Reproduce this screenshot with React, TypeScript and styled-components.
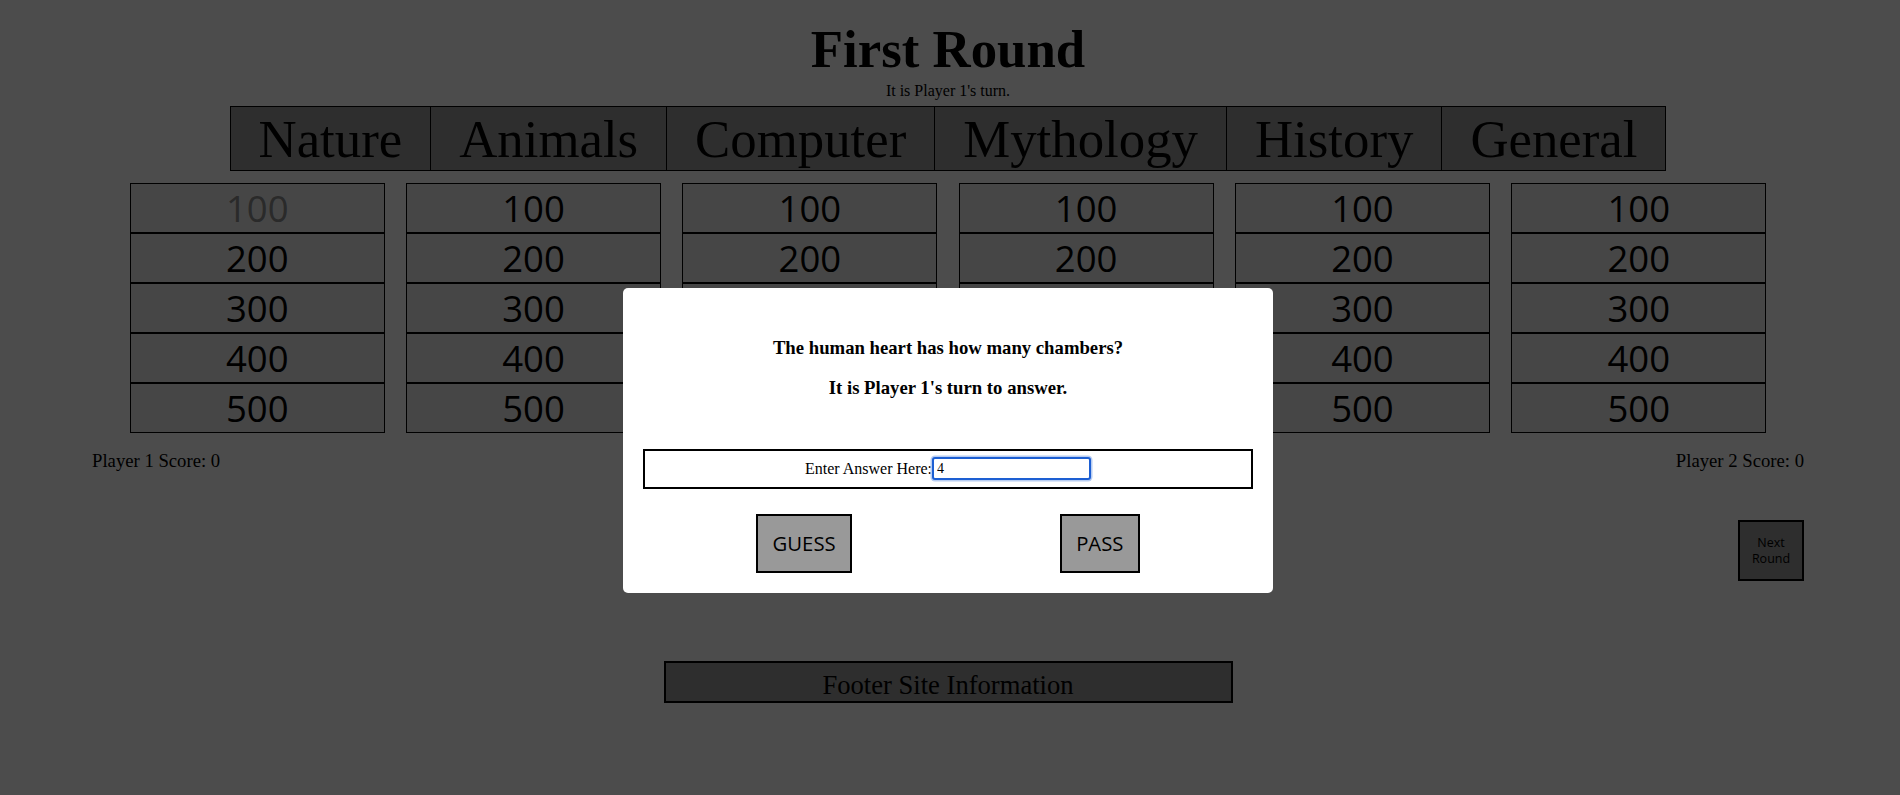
import React from "react";
import styled, { createGlobalStyle } from "styled-components";

const GlobalStyle = createGlobalStyle`
  html, body {
    margin: 0;
    padding: 0;
    background: #ffffff;
  }
  body {
    font-family: "Liberation Serif", "Times New Roman", serif;
    color: #000;
  }
`;

const Page = styled.div`
  width: 1896px;
  padding-top: 19px;
  display: flex;
  flex-direction: column;
  align-items: center;
`;

const Title = styled.h1`
  margin: 0;
  font-family: "Liberation Serif", serif;
  font-size: 52.8px;
  font-weight: bold;
  line-height: normal;
`;

const Turn = styled.div`
  margin-top: 2.5px;
  font-size: 16px;
  line-height: normal;
`;

const Categories = styled.div`
  display: flex;
  margin-top: 6px;
  border: 1px solid #000;
  background: #999999;
`;

const Category = styled.div`
  padding: 1px 28px 0;
  font-family: "Liberation Serif", serif;
  font-size: 52.8px;
  line-height: 62px;
  white-space: nowrap;
  & + & {
    border-left: 1px solid #000;
  }
`;

const Board = styled.div`
  display: grid;
  grid-template-columns: repeat(6, 255px);
  column-gap: 21.3px;
  margin-top: 12.5px;
`;

const Column = styled.div`
  display: flex;
  flex-direction: column;
`;

const Cell = styled.div<{ $used?: boolean }>`
  height: 48px;
  border: 1px solid #000;
  background: #ececec;
  display: flex;
  justify-content: center;
  font-family: "Open Sans", "Noto Sans", sans-serif;
  font-size: 36.5px;
  line-height: 48px;
  color: ${(p) => (p.$used ? "#8c8c8c" : "#000")};
`;

const Scores = styled.div`
  align-self: stretch;
  display: flex;
  justify-content: space-between;
  padding: 0 92px;
  margin-top: 17px;
  font-size: 18.7px;
  line-height: normal;
`;

const NextRow = styled.div`
  align-self: stretch;
  display: flex;
  justify-content: flex-end;
  padding-right: 92px;
  margin-top: 48px;
`;

const NextButton = styled.button`
  box-sizing: border-box;
  width: 66px;
  height: 61px;
  border: 2px solid #000;
  background: #999999;
  padding: 0 6px;
  font-family: "Open Sans", "Noto Sans", sans-serif;
  font-size: 12.5px;
  line-height: 16px;
  color: #000;
  text-align: center;
`;

const Footer = styled.footer`
  box-sizing: border-box;
  width: 569px;
  height: 42px;
  margin-top: 80px;
  padding-top: 7px;
  border: 2px solid #000;
  background: #999999;
  text-align: center;
  font-size: 26.6px;
  line-height: normal;
`;

const Overlay = styled.div`
  position: fixed;
  inset: 0;
  background: rgba(0, 0, 0, 0.7);
  display: flex;
  justify-content: center;
  align-items: flex-start;
  padding: 288px 4px 0 0;
`;

const Modal = styled.div`
  box-sizing: border-box;
  width: 650px;
  background: #ffffff;
  border-radius: 5px;
  padding: 48.7px 20px 20px;
  display: flex;
  flex-direction: column;
`;

const ModalText = styled.h3<{ $gap?: number }>`
  margin: ${(p) => p.$gap ?? 0}px 0 0;
  text-align: center;
  font-family: "Liberation Serif", serif;
  font-size: 18.72px;
  font-weight: bold;
  line-height: normal;
`;

const AnswerRow = styled.div`
  box-sizing: border-box;
  height: 40px;
  margin-top: 49.6px;
  border: 2px solid #000;
  display: flex;
  align-items: center;
  justify-content: center;
  font-size: 16px;
`;

const AnswerInput = styled.input`
  box-sizing: border-box;
  width: 159px;
  height: 23px;
  margin: 0;
  padding: 0 3px;
  border: 2px solid #1d5fd3;
  border-radius: 3px;
  box-shadow: 0 0 0 1.5px #b8cdf2;
  outline: none;
  font-family: "Liberation Serif", serif;
  font-size: 14px;
  color: #000;
  background: #fff;
`;

const ButtonRow = styled.div`
  display: flex;
  justify-content: space-between;
  margin-top: 25px;
  padding: 0 113px 0 113px;
`;

const ModalButton = styled.button`
  box-sizing: border-box;
  height: 59px;
  padding: 0 14.6px;
  border: 2px solid #000;
  background: #999999;
  font-family: "Open Sans", "Noto Sans", sans-serif;
  font-size: 20.3px;
  color: #000;
`;

const categories = ["Nature", "Animals", "Computer", "Mythology", "History", "General"];
const values = [100, 200, 300, 400, 500];

export default function App() {
  return (
    <>
      <GlobalStyle />
      <Page>
        <Title>First Round</Title>
        <Turn>It is Player 1's turn.</Turn>
        <Categories>
          {categories.map((c) => (
            <Category key={c}>{c}</Category>
          ))}
        </Categories>
        <Board>
          {categories.map((c, ci) => (
            <Column key={c}>
              {values.map((v) => (
                <Cell key={v} $used={ci === 0 && v === 100}>
                  {v}
                </Cell>
              ))}
            </Column>
          ))}
        </Board>
        <Scores>
          <span>Player 1 Score: 0</span>
          <span>Player 2 Score: 0</span>
        </Scores>
        <NextRow>
          <NextButton>Next Round</NextButton>
        </NextRow>
        <Footer>Footer Site Information</Footer>
      </Page>
      <Overlay>
        <Modal>
          <ModalText>The human heart has how many chambers?</ModalText>
          <ModalText $gap={18.7}>It is Player 1's turn to answer.</ModalText>
          <AnswerRow>
            <label htmlFor="answer">Enter Answer Here:</label>
            <AnswerInput id="answer" type="text" defaultValue="4" autoFocus />
          </AnswerRow>
          <ButtonRow>
            <ModalButton>GUESS</ModalButton>
            <ModalButton>PASS</ModalButton>
          </ButtonRow>
        </Modal>
      </Overlay>
    </>
  );
}
